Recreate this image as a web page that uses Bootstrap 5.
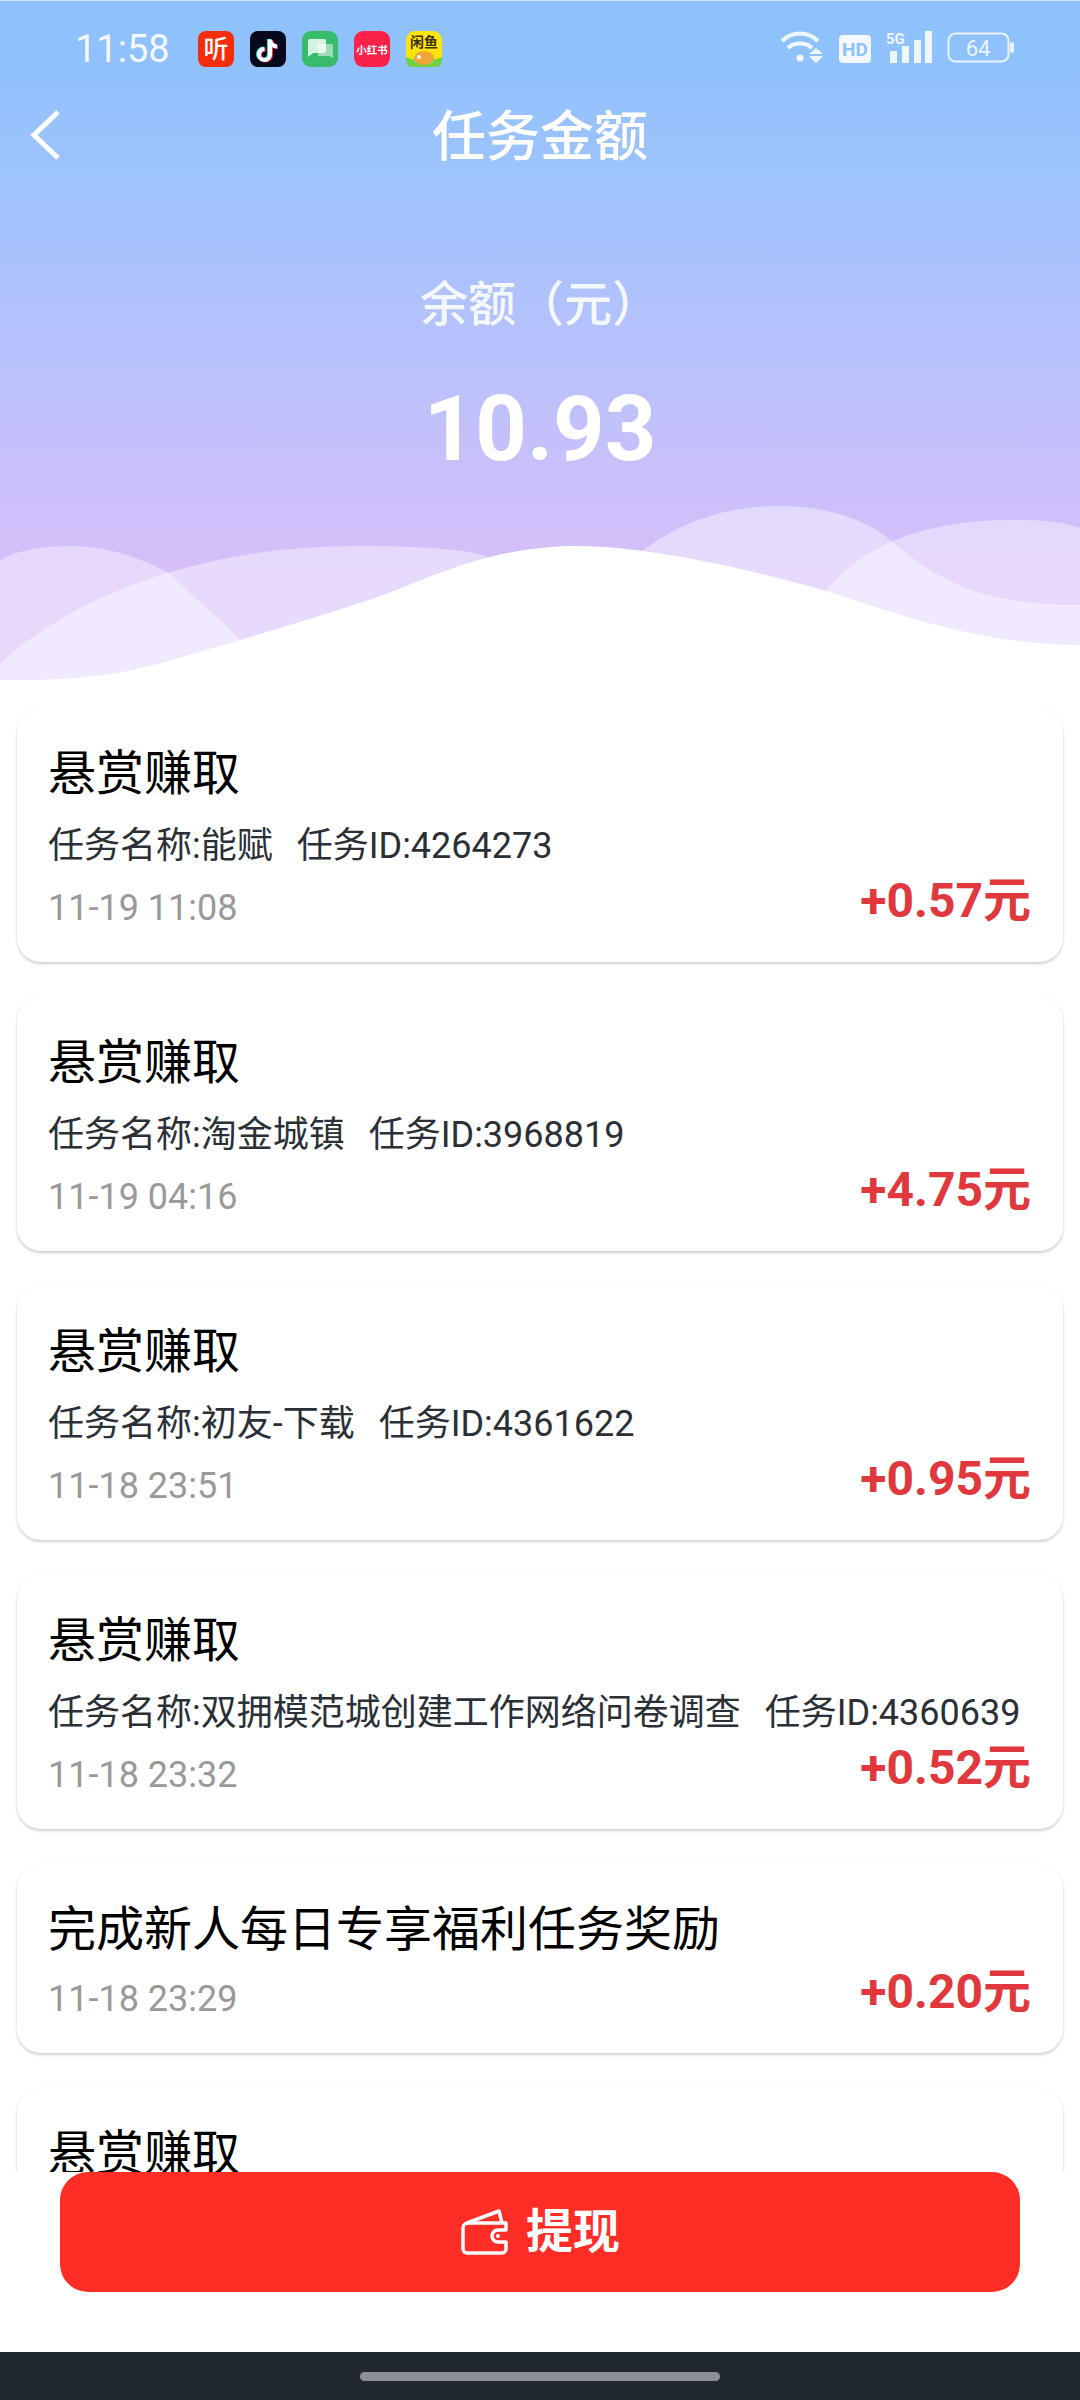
<!DOCTYPE html>
<html lang="zh-CN">
<head>
    <meta charset="UTF-8">
    <meta name="viewport" content="width=device-width, initial-scale=1.0">
    <title>任务金额</title>
    <link href="https://cdn.jsdelivr.net/npm/bootstrap@5.3.2/dist/css/bootstrap.min.css" rel="stylesheet">
    <style>
        html, body { height: 2400px; overflow: hidden; }
        body {
            background: #fff;
            font-family: Roboto, "Noto Sans CJK SC", sans-serif;
        }
        .screen { width: 1080px; height: 2400px; }

        /* top blue-to-violet header */
        .hero {
            height: 680px;
            background: linear-gradient(180deg, #8fc1fd 8%, #a0c3fd 28%, #d7bffa 84%);
            border-top: 1px solid #cfe4fb;
            color: #fff;
        }
        .hero-waves { left: 0; top: 0; width: 1080px; height: 680px; }
        .status-row { height: 95px; padding-left: 75px; padding-right: 66px; }
        .status-time { font-size: 38px; width: 123px; color: rgba(255,255,255,.92); line-height: 1; }
        .app-icons { gap: 16px; }
        .app-icons svg { display: block; }
        .sys-icons { height: 34px; margin-bottom: 6px; }
        .sys-icons svg + svg { margin-left: 15px; }
        .nav-row { height: 76px; padding-top: 6px; }
        .nav-back { left: 30px; top: 13px; }
        .nav-title { font-size: 54px; font-weight: 500; line-height: 72px; }
        .balance-label { font-size: 48px; font-weight: 500; line-height: 60px; margin-top: 103px; color: rgba(255,255,255,.88); }
        .balance-value { font-size: 90px; font-weight: 700; line-height: 100px; margin-top: 45px; }

        /* task list */
        .task-list { height: 1492px; overflow: hidden; padding: 28px 17px 0; gap: 35px; }
        .task-card {
            flex: none;
            border: 0;
            border-radius: 24px;
            padding: 32px 31px 23px 31px;
            box-shadow: 0 2px 3px rgba(0,0,0,.18), 0 0 2px rgba(0,0,0,.05);
        }
        .task-title { font-size: 48px; line-height: 68px; color: #000; }
        .task-sub { font-size: 36px; line-height: 62px; margin-top: 7px; color: #2b2f36; white-space: nowrap; }
        .task-sub span + span { margin-left: 24px; }
        .task-meta { height: 62px; }
        .task-date { font-size: 36px; line-height: 62px; color: #999; }
        .task-amount { font-size: 48px; font-weight: 700; line-height: 62px; margin-bottom: 14px; margin-right: 1px; color: #e0383c; }
        .task-title + .task-meta { margin-top: 4px; }

        /* withdraw button and nav bar */
        .footer-bar { height: 180px; padding: 0 60px 60px 60px; }
        .btn-withdraw {
            height: 120px;
            border: 0;
            border-radius: 28px;
            background: #fe2e27;
            color: #fff;
            font-size: 47px;
            font-weight: 700;
            gap: 16px;
        }
        .btn-withdraw:hover { background: #fe2e27; color: #fff; }
        .home-bar { height: 48px; background: #222831; }
        .home-handle { width: 360px; height: 9px; border-radius: 5px; background: #8d9095; }
    </style>
</head>
<body>
<div class="screen d-flex flex-column">
    <div class="hero position-relative flex-shrink-0">
        <svg class="hero-waves position-absolute" viewBox="0 0 1080 680">
            <path fill="#fff" fill-opacity=".42" d="M0 663 C50 615 170 545 358 545 C420 545 460 548 482 554 C510 562 530 580 540 600 L610 600 L630 560 C670 525 720 505 778 505 C830 505 870 520 895 543 C950 590 1000 604 1080 604 V680 H0 Z"/>
            <path fill="#fff" fill-opacity=".4" d="M0 559 C20 548 45 545 69 545 C115 545 145 560 171 573 C195 600 225 620 241 640 V680 H800 L826 590 C850 560 900 519 1012 519 C1040 519 1060 520 1080 527 V680 H0 Z"/>
            <path fill="#fff" d="M0 679 C60 680 110 676 158 663 C190 654 340 610 386 593 C430 577 490 545 578 545 C640 545 740 565 826 590 C895 612 980 644 1080 644 V680 H0 Z"/>
        </svg>

        <div class="position-relative">
            <div class="status-row d-flex align-items-center">
                <div class="status-time">11:58</div>
                <div class="app-icons d-flex">
                    <svg width="36" height="36" viewBox="0 0 36 36"><rect width="36" height="36" rx="8" fill="#f42d0c"/><text x="18" y="27" text-anchor="middle" font-size="25" font-weight="500" fill="#fff" font-family="'Noto Sans CJK SC'">听</text></svg>
                    <svg width="36" height="36" viewBox="0 0 36 36"><rect width="36" height="36" rx="8" fill="#07091a"/><g fill="none" stroke-width="4"><path stroke="#25e6e6" d="M19 8 V23 a5.5 5.5 0 1 1 -5.5 -5.5 M19 8 c0 4 3.5 7 7 7"/><path stroke="#f5305a" d="M21 9 V24 a5.5 5.5 0 1 1 -5.5 -5.5 M21 9 c0 4 3.5 7 7 7"/><path stroke="#fff" d="M20 8.500 V23.500 a5.500 5.500 0 1 1 -5.500 -5.500 M20 8.500 c0 4 3.500 7 7 7"/></g></svg>
                    <svg width="36" height="36" viewBox="0 0 36 36"><rect width="36" height="36" rx="9" fill="#36bc6c"/><path fill="#fff" fill-opacity=".5" d="M16 13 H29 a2 2 0 0 1 2 2 V27 L27 25 H16 Z"/><path fill="#fff" fill-opacity=".8" d="M8 8 H22 a2 2 0 0 1 2 2 V20 a2 2 0 0 1 -2 2 H11 L6 26 V10 a2 2 0 0 1 2 -2 Z"/></svg>
                    <svg width="36" height="36" viewBox="0 0 36 36"><rect width="36" height="36" rx="9" fill="#fb2149"/><text x="18" y="23" text-anchor="middle" font-size="10.500" font-weight="700" fill="#fff" font-family="'Noto Sans CJK SC'">小红书</text></svg>
                    <svg width="36" height="36" viewBox="0 0 36 36"><rect width="36" height="36" rx="9" fill="#fde40b"/><path fill="#6fd13f" d="M0 26 C6 30 30 30 36 26 V30 a6 6 0 0 1 -6 6 H6 a6 6 0 0 1 -6 -6 Z"/><ellipse cx="18" cy="27" rx="10" ry="7" fill="#f0a53a"/><circle cx="13" cy="26" r="2" fill="#fff"/><text x="18" y="16" text-anchor="middle" font-size="14" font-weight="700" fill="#3c3208" font-family="'Noto Sans CJK SC'">闲鱼</text></svg>
                </div>
                <div class="sys-icons d-flex align-items-end ms-auto">
                    <svg width="44" height="33" viewBox="0 0 44 33" fill="none" stroke="#fff" stroke-opacity=".85" stroke-width="4"><path d="M2 11 C12 1 28 1 38 11"/><path d="M8 18 C14 12 26 12 32 18"/><circle cx="20" cy="28" r="3.500" fill="#fff" fill-opacity=".85" stroke="none"/><path fill="#fff" fill-opacity=".85" stroke="none" d="M36 18 L43 24 H29 Z M29 26 H43 L36 33 Z"/></svg>
                    <svg width="32" height="28" viewBox="0 0 32 28"><rect width="32" height="28" rx="4" fill="#fff" fill-opacity=".88"/><text x="16" y="21" text-anchor="middle" font-size="19" font-weight="700" fill="#8fc1fd" font-family="Roboto">HD</text></svg>
                    <svg width="46" height="32" viewBox="0 0 46 32"><text x="0" y="13" font-size="15" font-weight="700" fill="#fff" fill-opacity=".88" font-family="Roboto">5G</text><g fill="#fff" fill-opacity=".85"><rect x="4" y="20" width="7" height="12"/><rect x="16" y="15" width="7" height="17"/><rect x="28" y="9" width="7" height="23"/><rect x="39" y="0" width="7" height="32"/></g></svg>
                    <svg width="67" height="31" viewBox="0 0 67 31"><rect x="1.500" y="1.500" width="60" height="28" rx="7" fill="none" stroke="#fff" stroke-opacity=".8" stroke-width="2"/><rect x="63" y="10" width="4" height="11" rx="2" fill="#fff" fill-opacity=".8"/><text x="31" y="24" text-anchor="middle" font-size="22" fill="#fff" fill-opacity=".85" font-family="Roboto">64</text></svg>
                </div>
            </div>

            <div class="nav-row position-relative text-center">
                <svg class="nav-back position-absolute" width="32" height="52" viewBox="0 0 32 52" fill="none" stroke="#fff" stroke-width="5"><path d="M28 3 L4 26 L28 49"/></svg>
                <div class="nav-title">任务金额</div>
            </div>

            <div class="balance-label text-center">余额（元）</div>
            <div class="balance-value text-center">10.93</div>
        </div>
    </div>

    <div class="task-list d-flex flex-column">
        <div class="card task-card">
            <div class="task-title">悬赏赚取</div>
            <div class="task-sub"><span>任务名称:能赋</span><span>任务ID:4264273</span></div>
            <div class="task-meta d-flex justify-content-between align-items-center"><span class="task-date">11-19 11:08</span><span class="task-amount">+0.57元</span></div>
        </div>
        <div class="card task-card">
            <div class="task-title">悬赏赚取</div>
            <div class="task-sub"><span>任务名称:淘金城镇</span><span>任务ID:3968819</span></div>
            <div class="task-meta d-flex justify-content-between align-items-center"><span class="task-date">11-19 04:16</span><span class="task-amount">+4.75元</span></div>
        </div>
        <div class="card task-card">
            <div class="task-title">悬赏赚取</div>
            <div class="task-sub"><span>任务名称:初友-下载</span><span>任务ID:4361622</span></div>
            <div class="task-meta d-flex justify-content-between align-items-center"><span class="task-date">11-18 23:51</span><span class="task-amount">+0.95元</span></div>
        </div>
        <div class="card task-card">
            <div class="task-title">悬赏赚取</div>
            <div class="task-sub"><span>任务名称:双拥模范城创建工作网络问卷调查</span><span>任务ID:4360639</span></div>
            <div class="task-meta d-flex justify-content-between align-items-center"><span class="task-date">11-18 23:32</span><span class="task-amount">+0.52元</span></div>
        </div>
        <div class="card task-card">
            <div class="task-title">完成新人每日专享福利任务奖励</div>
            <div class="task-meta d-flex justify-content-between align-items-center"><span class="task-date">11-18 23:29</span><span class="task-amount">+0.20元</span></div>
        </div>
        <div class="card task-card">
            <div class="task-title">悬赏赚取</div>
        </div>
    </div>

    <div class="footer-bar bg-white flex-shrink-0">
        <button type="button" class="btn btn-withdraw w-100 d-flex align-items-center justify-content-center">
            <svg width="50" height="48" viewBox="0 0 50 48" fill="none" stroke="#fff" stroke-width="3.500" stroke-linejoin="round"><path d="M46 15 H8 a5 5 0 0 0 -5 5 V41 a4 4 0 0 0 4 4 H42 a4 4 0 0 0 4 -4 V34 H38 a6 6 0 0 1 0 -12 H46 Z"/><path d="M7 15 L39 3 L42 15"/><circle cx="38" cy="28" r="2" fill="#fff" stroke="none"/></svg>
            <span>提现</span>
        </button>
    </div>

    <div class="home-bar d-flex justify-content-center align-items-center flex-shrink-0">
        <div class="home-handle"></div>
    </div>
</div>
<script src="https://cdn.jsdelivr.net/npm/bootstrap@5.3.2/dist/js/bootstrap.bundle.min.js"></script>
</body>
</html>
